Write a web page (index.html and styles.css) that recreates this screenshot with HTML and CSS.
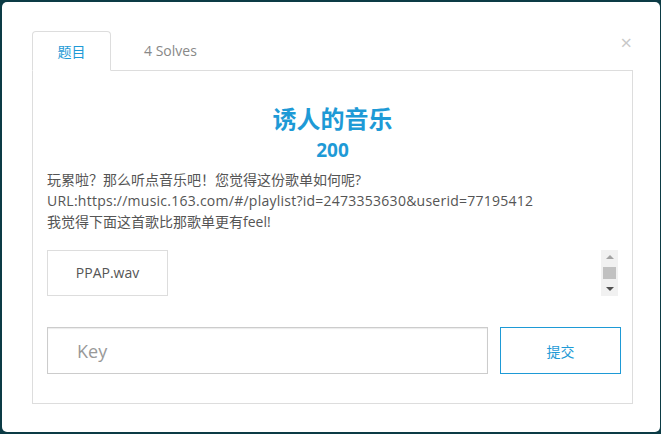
FILE: index.html
```html
<!DOCTYPE html>
<html lang="zh">
<head>
  <meta charset="UTF-8" />
  <title>诱人的音乐</title>
  <link rel="stylesheet" href="styles.css">
</head>
<body>

<div class="modal">
  <span class="close">&times;</span>

  <!-- tabs -->
  <ul class="tabs">
    <li class="tab active">题目</li>
    <li class="tab">4 Solves</li>
  </ul>

  <div class="panel">
    <h2 class="title">诱人的音乐</h2>
    <div class="score">200</div>
    <p class="desc">
      玩累啦？那么听点音乐吧！您觉得这份歌单如何呢?<br>
      <span class="latin">URL:https://music.163.com/#/playlist?id=2473353630&amp;userid=77195412</span><br>
      我觉得下面这首歌比那歌单更有feel!
    </p>

    <div class="files">
      <div class="file-list">
        <a class="file">PPAP.wav</a>
      </div>
      <!-- fake scrollbar -->
      <div class="scrollbar">
        <span class="arrow up"></span>
        <span class="thumb"></span>
        <span class="arrow down"></span>
      </div>
    </div>

    <form class="submit-row" onsubmit="return false">
      <input class="key" type="text" placeholder="Key">
      <button class="btn">提交</button>
    </form>
  </div>
</div>

</body>
</html>
```

FILE: styles.css
```css
body {
  margin: 0;
  background-color: #0c3b45;
  font-family: "Open Sans", "Noto Sans CJK SC", sans-serif;
}

.modal {
  position: relative;
  margin: 2px 0 0 2px;
  width: 658px;
  height: 430px;
  box-sizing: border-box;
  padding: 29px 27px 0 30px;
  background-color: #ffffff;
  border-radius: 5px;
}

.close {
  position: absolute;
  top: 31px;
  right: 28px;
  font-size: 20px;
  color: #c8c8c8;
  line-height: 20px;
}

/* Tabs */
.tabs {
  display: flex;
  margin: 0 0 -1px 0;
  padding: 0;
  list-style: none;
}
.tab {
  height: 40px;
  line-height: 40px;
  font-size: 14px;
  color: #888;
  box-sizing: border-box;
}
.tab.active {
  width: 79px;
  text-align: center;
  color: #1e9ad6;
  border: 1px solid #dddddd;
  border-bottom-color: #ffffff;
  border-radius: 4px 4px 0 0;
  background-color: #fff;
}
.tab + .tab {
  padding-left: 33px;
}

/* Panel */
.panel {
  height: 334px;
  box-sizing: border-box;
  border: 1px solid #dddddd;
  padding: 33px 14px 0 14px;
}
.title {
  margin: 0;
  text-align: center;
  font-size: 24px;
  line-height: 30px;
  font-weight: bold;
  color: #1e9ad6;
}
.score {
  text-align: center;
  font-size: 19px;
  line-height: 32px;
  font-weight: bold;
  color: #1e9ad6;
}
.desc {
  margin: 3px 0 0 0;
  font-size: 14px;
  line-height: 21px;
  color: #555;
}
.latin {
  letter-spacing: 0.25px;
}

/* Files */
.files {
  display: flex;
  justify-content: space-between;
  margin-top: 18px;
  height: 46px;
}
.file {
  display: block;
  width: 121px;
  height: 46px;
  box-sizing: border-box;
  border: 1px solid #dddddd;
  line-height: 44px;
  text-align: center;
  font-size: 14px;
  color: #555;
}
.scrollbar {
  width: 17px;
  height: 46px;
  background-color: #f1f1f1;
  display: flex;
  flex-direction: column;
  align-items: center;
  justify-content: space-between;
  padding: 5px 0;
  box-sizing: border-box;
}
.arrow {
  width: 0;
  height: 0;
  border-left: 4px solid transparent;
  border-right: 4px solid transparent;
}
.arrow.up {
  border-bottom: 4px solid #a3a3a3;
}
.arrow.down {
  border-top: 4px solid #505050;
}
.thumb {
  width: 13px;
  height: 12px;
  background-color: #c1c1c1;
}

/* Submit row */
.submit-row {
  display: flex;
  margin: 31px -3px 0 0;
}
.key {
  flex-shrink: 0;
  width: 441px;
  height: 47px;
  box-sizing: border-box;
  border: 1px solid #cccccc;
  box-shadow: inset 0 1px 1px rgba(0, 0, 0, 0.08);
  padding: 0 0 0 29px;
  font-family: inherit;
  font-size: 18px;
  color: #555;
  outline: none;
}
.key::placeholder {
  color: #999;
}
.btn {
  flex-shrink: 0;
  margin-left: 12px;
  width: 121px;
  height: 47px;
  box-sizing: border-box;
  border: 1px solid #1e9ad6;
  background-color: #fff;
  font-family: inherit;
  font-size: 14px;
  color: #1e9ad6;
  cursor: pointer;
}
```
